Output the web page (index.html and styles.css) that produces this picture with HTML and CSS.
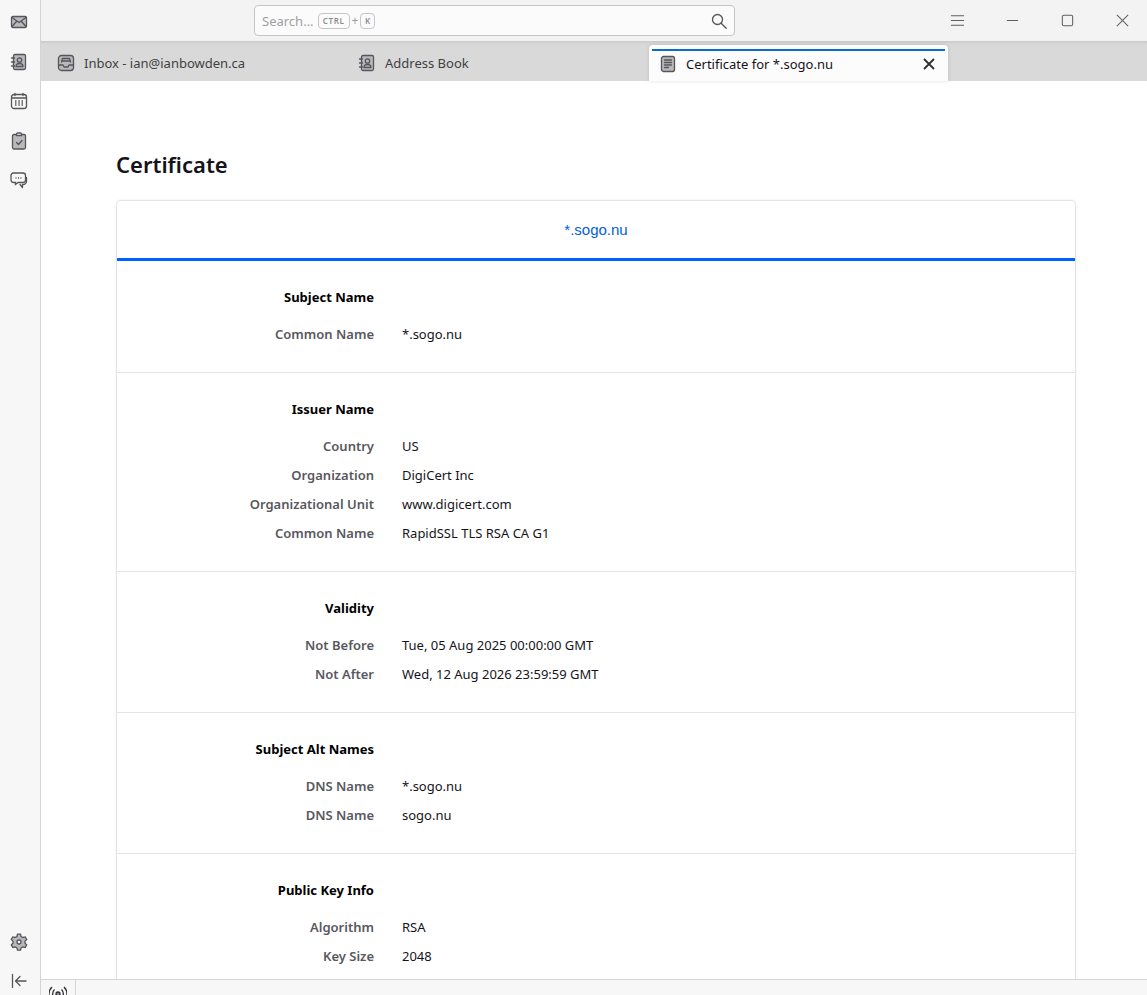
FILE: index.html
```html
<!DOCTYPE html>
<html lang="en">
<head>
<meta charset="utf-8">
<title>Certificate for *.sogo.nu</title>
<link rel="stylesheet" href="styles.css">
</head>
<body>
<div class="app">
  <aside class="spaces">
    <div class="space-top">
      <svg class="space-icon" viewBox="0 0 18 18"><rect x="1.5" y="3.5" width="15" height="11" rx="1.5" class="ic-fill"/><path d="M2 4.5l7 5 7-5M2 13.5l4.5-5M16 13.5l-4.5-5" class="ic-line"/></svg>
      <svg class="space-icon" viewBox="0 0 18 18"><rect x="3.5" y="1.5" width="12" height="15" rx="1.5" class="ic-fill"/><path d="M1.5 5h3M1.5 9h3M1.5 13h3" class="ic-line"/><circle cx="9.5" cy="7" r="2.2" class="ic-line"/><path d="M6 13.5c0-2 1.5-3 3.500-3s3.500 1 3.500 3z" class="ic-line"/></svg>
      <svg class="space-icon" viewBox="0 0 18 18"><rect x="1.500" y="2.500" width="15" height="14" rx="2.500" class="ic-white"/><path d="M2 6h14M5 1.500v2M13 1.500v2" class="ic-line"/><path d="M5 9h1.500M8.300 9h1.500M11.500 9h1.500M5 11h1.500M8.300 11h1.500M11.500 11h1.500M5 13h1.500M8.300 13h1.500M11.500 13h1.500" class="ic-dots"/></svg>
      <svg class="space-icon" viewBox="0 0 18 18"><rect x="2.500" y="2.500" width="13" height="14.500" rx="1.500" class="ic-fill"/><path d="M6.500 2.500c0-1 .5-1.500 1-1.500h3c.5 0 1 .5 1 1.500v1h-5z" class="ic-white"/><path d="M6.500 10.500l2 2 3.500-4" class="ic-line"/></svg>
      <svg class="space-icon" viewBox="0 0 18 18"><path d="M3.500 2h9.500c1.500 0 2.500 1 2.500 2.500v4.500c0 1.500-1 2.500-2.500 2.500h-5l-2.500 2v-2h-2c-1.500 0-2.500-1-2.500-2.500v-4.500c0-1.500 1-2.500 2.500-2.500z" class="ic-white"/><path d="M10 13.500l2.500 3v-3c2 0 4-1 4-3.500V6.500" class="ic-line"/><path d="M5.500 7h1M8 7h1M10.500 7h1" class="ic-dots"/></svg>
    </div>
    <div class="space-bottom">
      <svg class="space-icon gear" viewBox="0 0 18 18"><path d="M7.500 1.200h3l.6 2.300 1.800 1 2.300-.6 1.500 2.600-1.700 1.700v2l1.700 1.700-1.500 2.600-2.300-.6-1.800 1-.6 2.300h-3l-.6-2.300-1.800-1-2.300.6-1.500-2.600 1.700-1.700v-2L1.300 6.500l1.500-2.600 2.300.6 1.800-1z" class="ic-fill"/><circle cx="9" cy="9" r="2" class="ic-white"/></svg>
      <svg class="space-icon collapse" viewBox="0 0 18 18"><path d="M2.500 2.500v13M16 9H5.500M10 4.500L5.500 9l4.500 4.500" class="ic-line"/></svg>
    </div>
  </aside>
  <div class="window">
    <header class="titlebar">
      <div class="search">
        <span class="search-hint">Search...</span>
        <kbd class="key key-wide">CTRL</kbd>
        <span class="plus">+</span>
        <kbd class="key">K</kbd>
        <svg class="search-icon" viewBox="0 0 16 16"><circle cx="6.500" cy="6.500" r="5" class="ic-line"/><path d="M10.200 10.200l5 5" class="ic-line"/></svg>
      </div>
      <div class="controls">
        <div class="control"><svg viewBox="0 0 16 16"><path d="M1 3h14M1 8h14M1 13h14" class="win-line"/></svg></div>
        <div class="control"><svg viewBox="0 0 16 16"><path d="M2 8h12" class="win-line"/></svg></div>
        <div class="control"><svg viewBox="0 0 16 16"><rect x="2.500" y="2.500" width="11" height="11" rx="1.500" class="win-line"/></svg></div>
        <div class="control"><svg viewBox="0 0 16 16"><path d="M2 2l12 12M14 2L2 14" class="win-line"/></svg></div>
      </div>
    </header>
    <nav class="tabs">
      <div class="tab">
        <svg class="tab-icon" viewBox="0 0 18 18"><rect x="1.500" y="1.500" width="15" height="15" rx="3" class="ic-fill"/><path d="M2 11h4l1 2h4l1-2h4" class="ic-line"/><path d="M4.500 8l1-3.500h7l1 3.500M5 7h8" class="ic-line"/></svg>
        <span>Inbox - ian@ianbowden.ca</span>
      </div>
      <div class="tab">
        <svg class="tab-icon" viewBox="0 0 18 18"><rect x="3.500" y="1.500" width="12" height="15" rx="1.500" class="ic-fill"/><path d="M1.500 5h3M1.500 9h3M1.500 13h3" class="ic-line"/><circle cx="9.500" cy="7" r="2.200" class="ic-line"/><path d="M6 13.500c0-2 1.500-3 3.500-3s3.500 1 3.500 3z" class="ic-line"/></svg>
        <span>Address Book</span>
      </div>
      <div class="tab tab-active">
        <svg class="tab-icon" viewBox="0 0 18 18"><rect x="2.500" y="1.500" width="13" height="15" rx="2" class="ic-fill"/><path d="M5.500 5h7M5.500 7.500h7M5.500 10h7M5.500 12.500h4" class="ic-line"/></svg>
        <span class="tab-label">Certificate for *.sogo.nu</span>
        <svg class="tab-close" viewBox="0 0 12 12"><path d="M1 1l10 10M11 1L1 11" class="close-line"/></svg>
      </div>
    </nav>
    <main class="content">
      <h1 class="page-title">Certificate</h1>
      <section class="card">
        <div class="card-tab">*.sogo.nu</div>
        <div class="info-group">
          <div class="info-row info-heading"><div class="info-label">Subject Name</div></div>
          <div class="info-row"><div class="info-label">Common Name</div><div class="info-value">*.sogo.nu</div></div>
        </div>
        <div class="info-group">
          <div class="info-row info-heading"><div class="info-label">Issuer Name</div></div>
          <div class="info-row"><div class="info-label">Country</div><div class="info-value">US</div></div>
          <div class="info-row"><div class="info-label">Organization</div><div class="info-value">DigiCert Inc</div></div>
          <div class="info-row"><div class="info-label">Organizational Unit</div><div class="info-value">www.digicert.com</div></div>
          <div class="info-row"><div class="info-label">Common Name</div><div class="info-value">RapidSSL TLS RSA CA G1</div></div>
        </div>
        <div class="info-group">
          <div class="info-row info-heading"><div class="info-label">Validity</div></div>
          <div class="info-row"><div class="info-label">Not Before</div><div class="info-value">Tue, 05 Aug 2025 00:00:00 GMT</div></div>
          <div class="info-row"><div class="info-label">Not After</div><div class="info-value">Wed, 12 Aug 2026 23:59:59 GMT</div></div>
        </div>
        <div class="info-group">
          <div class="info-row info-heading"><div class="info-label">Subject Alt Names</div></div>
          <div class="info-row"><div class="info-label">DNS Name</div><div class="info-value">*.sogo.nu</div></div>
          <div class="info-row"><div class="info-label">DNS Name</div><div class="info-value">sogo.nu</div></div>
        </div>
        <div class="info-group">
          <div class="info-row info-heading"><div class="info-label">Public Key Info</div></div>
          <div class="info-row"><div class="info-label">Algorithm</div><div class="info-value">RSA</div></div>
          <div class="info-row"><div class="info-label">Key Size</div><div class="info-value">2048</div></div>
          <div class="info-row"><div class="info-label">Exponent</div><div class="info-value">65537</div></div>
        </div>
      </section>
    </main>
    <footer class="statusbar">
      <div class="status-cell"><svg class="status-icon" viewBox="0 0 18 18"><circle cx="9" cy="9" r="2" class="status-dot"/><path d="M5.500 4.500c-2.500 2.500-2.500 6.500 0 9M12.500 4.500c2.500 2.500 2.500 6.500 0 9M3 2c-4 4-4 10 0 14M15 2c4 4 4 10 0 14" class="status-line"/></svg></div>
    </footer>
  </div>
</div>
</body>
</html>
```
FILE: styles.css
```css
* { box-sizing: border-box; }
html, body { margin: 0; height: 100%; overflow: hidden; }
body {
  font-family: "Noto Sans", "Open Sans", sans-serif;
  font-size: 13px;
  color: #15141a;
  background: #fff;
}
.app { display: flex; height: 995px; }

.ic-fill { fill: #b9b9bc; stroke: #55555a; stroke-width: 1.3; }
.ic-white { fill: #f7f7f7; stroke: #55555a; stroke-width: 1.3; }
.ic-line { fill: none; stroke: #55555a; stroke-width: 1.3; stroke-linecap: round; stroke-linejoin: round; }
.ic-dots { fill: none; stroke: #55555a; stroke-width: 1.3; }

.spaces {
  width: 41px;
  flex: none;
  background: #f7f7f7;
  border-right: 1px solid #d4d4d6;
  display: flex;
  flex-direction: column;
  justify-content: space-between;
  align-items: center;
  padding: 13px 0 5px;
}
.space-top { display: flex; flex-direction: column; gap: 21.500px; }
.space-bottom { display: flex; flex-direction: column; gap: 21px; }
.space-icon { width: 18px; height: 18px; display: block; margin-right: 3px; }

.window { flex: 1; min-width: 0; display: flex; flex-direction: column; }

.titlebar {
  height: 41px;
  flex: none;
  background: #f3f3f3;
  display: flex;
  align-items: flex-start;
  padding: 5px 0 0 213px;
  overflow: hidden;
}
.search {
  width: 481px;
  height: 31px;
  flex: none;
  border: 1px solid #c6c6c9;
  border-radius: 4px;
  background: #fbfbfb;
  display: flex;
  align-items: center;
  padding: 0 7px;
  color: #9f9fa3;
}
.search-hint { font-size: 13px; margin-right: 4px; }
.key {
  font: 600 8px "Noto Sans", sans-serif;
  letter-spacing: .6px;
  height: 16px;
  min-width: 15px;
  padding: 0 3px;
  border: 1px solid #c6c6c9;
  border-radius: 4px;
  display: flex;
  align-items: center;
  justify-content: center;
  color: #8c8c90;
}
.key-wide { width: 32px; }
.plus { margin: 0 2px; font-size: 12px; }
.search-icon { width: 16px; height: 16px; margin-left: auto; }

.controls { display: flex; flex: none; margin: -5px 0 0 195px; }
.control { width: 55px; height: 40px; display: flex; align-items: center; justify-content: center; }
.control svg { width: 15px; height: 15px; }
.win-line { fill: none; stroke: #5f5f63; stroke-width: 1.1; }

.tabs {
  height: 40px;
  flex: none;
  background: #d9d9d9;
  box-shadow: inset 0 3px 3px -2px #c3c3c3;
  display: flex;
  align-items: flex-end;
  gap: 2px;
  padding-left: 6px;
}
.tab {
  width: 299px;
  height: 36px;
  flex: none;
  display: flex;
  align-items: center;
  gap: 9px;
  padding: 0 11px 0 10px;
  color: #3f3f44;
  font-size: 13px;
  position: relative;
}
.tab-icon { width: 18px; height: 18px; flex: none; }
.tab-active {
  background: #fcfcfc;
  border-radius: 4px 4px 0 0;
  box-shadow: 0 0 4px rgba(0,0,0,.12);
  color: #15141a;
  padding-top: 1px;
}
.tab-active::before {
  content: "";
  position: absolute;
  left: 3px;
  right: 3px;
  top: 4px;
  height: 2px;
  background: #0a6ec8;
}
.tab-label { flex: 1; }
.tab-close { width: 12px; height: 12px; flex: none; margin-right: 2px; }
.close-line { fill: none; stroke: #2f2f33; stroke-width: 1.8; }

.content {
  flex: 1;
  min-height: 0;
  overflow: hidden;
  background: #fff;
  padding: 0 71px 0 75px;
}
.page-title {
  font-size: 22px;
  font-weight: 600;
  line-height: 30px;
  margin: 68px 0 21px;
  color: #15141a;
}
.card {
  border: 1px solid #e4e4e6;
  border-radius: 4px;
  box-shadow: 0 0 3px rgba(0,0,0,.06);
}
.card-tab {
  height: 60px;
  border-bottom: 3px solid #0060ff;
  display: flex;
  align-items: center;
  justify-content: center;
  font: 15px "Liberation Sans", Arial, sans-serif;
  color: #0060df;
}
.info-group {
  padding: 21px 0 24px;
  border-bottom: 1px solid #e4e4e6;
}
.info-row {
  display: grid;
  grid-template-columns: 257px 1fr;
  column-gap: 28px;
  height: 29px;
  align-items: center;
}
.info-heading { height: 29px; margin-bottom: 8px; }
.info-heading .info-label { color: #000; font-weight: 700; }
.info-label { text-align: right; font-weight: 600; color: #58585e; }
.info-value { color: #15141a; }

.statusbar {
  height: 16px;
  flex: none;
  background: #f7f7f7;
  border-top: 1px solid #d4d4d6;
  position: relative;
  z-index: 1;
  overflow: hidden;
  display: flex;
}
.status-cell {
  width: 35px;
  border-right: 1px solid #d4d4d6;
  display: flex;
  justify-content: center;
  padding-top: 5px;
}
.status-icon { width: 18px; height: 18px; flex: none; }
.status-dot { fill: #8b8b8f; stroke: #2f2f33; stroke-width: 1.3; }
.status-line { fill: none; stroke: #2f2f33; stroke-width: 1.3; }
```
